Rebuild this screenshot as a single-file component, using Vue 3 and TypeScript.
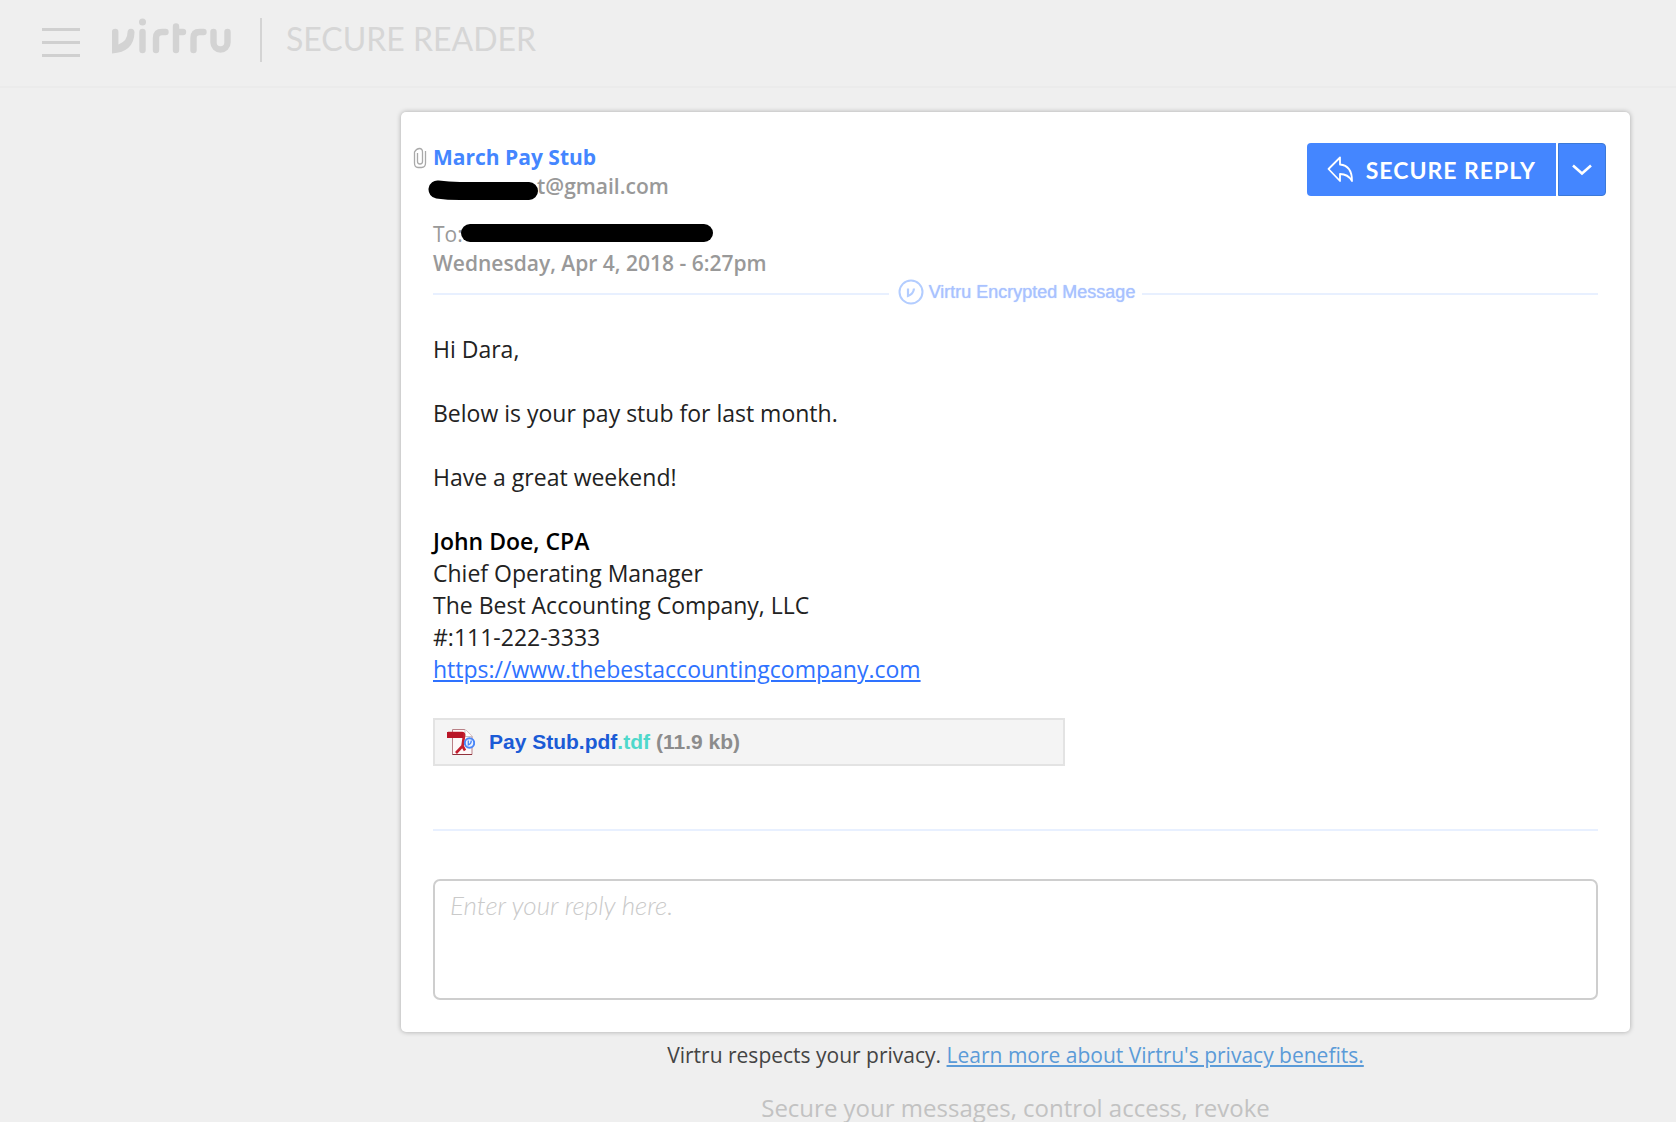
<script setup lang="ts">
import { ref } from 'vue'

const reply = ref('')

const signature: string[] = [
  'Chief Operating Manager',
  'The Best Accounting Company, LLC',
  '#:111-222-3333',
]
</script>

<template>
  <div class="page">
    <header class="topbar">
      <button class="menu" type="button" aria-label="Menu">
        <span></span><span></span><span></span>
      </button>
      <svg class="logo" width="120" height="36" viewBox="0 0 120 36" role="img" aria-label="Virtru">
        <g fill="none" stroke="#d3d3d3" stroke-width="6.4" stroke-linecap="round" stroke-linejoin="round">
          <path d="M30.500 14V32" />
          <path d="M44 32V20q0-6 6-6h3.500" />
          <path d="M64 8.500V32M64 14h7" />
          <path d="M81.500 32V20q0-6 6-6h4" />
          <path d="M101.500 14v10.500a7 7 0 0 0 14 0V14" />
        </g>
        <circle cx="30.500" cy="4" r="3.500" fill="#d3d3d3" />
        <path d="M0 13.500q0-2.800 3.200-2.800t3.200 2.800V26.500Q15.500 23 15.500 14.500q0-3.800 3.500-3.800t3.500 3.800Q22 34 0 35.500z" fill="#d3d3d3" />
      </svg>
      <span class="product">SECURE READER</span>
    </header>

    <div class="column">
      <main class="card">
        <div class="head">
          <div class="meta">
            <h1 class="subject">
              <svg class="clip" width="14" height="22" viewBox="0 0 14 22" aria-hidden="true">
                <path d="M4.500 6v8.500a2.500 2.500 0 0 0 5 0V5Q9.500 1.500 6.500 1.500T1.500 5V16q0 4.500 3.500 4.500h3.500q4 0 4-4.500V4" fill="none" stroke="#a9a9a9" stroke-width="1.300" />
              </svg>
              March Pay Stub
            </h1>
            <p class="from">
              <svg class="redact redact-from" width="110" height="21" viewBox="0 0 110 21" aria-hidden="true">
                <path d="M9.500 9.500Q20 11 32 11H101" fill="none" stroke="#000" stroke-width="18" stroke-linecap="round" />
              </svg>t@gmail.com
            </p>
            <p class="to">To:<span class="redact redact-to"></span></p>
            <p class="date">Wednesday, Apr 4, 2018 - 6:27pm</p>
          </div>
          <div class="actions">
            <button class="reply" type="button">
              <svg width="27" height="27" viewBox="0 0 27 27" aria-hidden="true">
                <path d="M1.500 13L13 1.500V8.500Q25 9.500 25 25Q21 18 13 18V25z" fill="none" stroke="#fff" stroke-width="1.800" stroke-linejoin="round" />
              </svg>
              SECURE REPLY
            </button>
            <button class="more" type="button" aria-label="More reply options">
              <svg width="22" height="14" viewBox="0 0 22 14" aria-hidden="true">
                <path d="M2 2.500L11 10.500L20 2.500" fill="none" stroke="#fff" stroke-width="2.600" />
              </svg>
            </button>
          </div>
        </div>

        <div class="seal">
          <svg width="26" height="26" viewBox="0 0 26 26" aria-hidden="true">
            <circle cx="13" cy="13" r="11.500" fill="none" stroke="#b3cdff" stroke-width="2" />
            <path d="M10 9.500V17Q15.500 15 16 9.500" fill="none" stroke="#b3cdff" stroke-width="2.200" />
          </svg>
          Virtru Encrypted Message
        </div>

        <div class="body">
          <p>Hi Dara,</p>
          <p>Below is your pay stub for last month.</p>
          <p>Have a great weekend!</p>
          <div class="signature">
            <strong>John Doe, CPA</strong>
            <span v-for="line in signature" :key="line">{{ line }}</span>
            <a href="https://www.thebestaccountingcompany.com">https://www.thebestaccountingcompany.com</a>
          </div>
        </div>

        <div class="attachment">
          <svg width="28" height="28" viewBox="0 0 28 28" aria-hidden="true">
            <path d="M5.500 1.500H18L25 8.500V26.500H5.500z" fill="#fdf8f8" stroke="#b98086" />
            <path d="M18 1.500V8.500H25" fill="#fff" stroke="#c9c2c4" />
            <path d="M5.500 26.500H25" stroke="#90323c" />
            <path d="M1 5H15q2.500 0 2 3L15.500 18 18 22.500M15.500 18L9 25" fill="none" stroke="#c41e2e" stroke-width="2.600" />
            <path d="M0 4H16V10H0z" fill="#b91527" />
            <circle cx="22.500" cy="15" r="4.700" fill="#e9f1ff" stroke="#4a86f7" stroke-width="2" />
            <path d="M21.300 12.500V17Q24.300 16 24.300 12.500" fill="none" stroke="#4a86f7" stroke-width="1.300" />
          </svg>
          <a class="file" href="#attachment">Pay Stub.pdf<span class="ext">.tdf</span></a>
          <span class="size">(11.9 kb)</span>
        </div>

        <hr class="rule" />

        <textarea v-model="reply" class="editor" aria-label="Reply" placeholder="Enter your reply here."></textarea>
      </main>

      <footer class="footer">
        <p class="privacy">Virtru respects your privacy. <a href="#privacy">Learn more about Virtru's privacy benefits.</a></p>
        <p class="tagline">Secure your messages, control access, revoke</p>
      </footer>
    </div>
  </div>
</template>

<style>
body {
  background: #efefef;
  overflow: hidden;
}
</style>

<style scoped>
.page {
  font-family: "Open Sans", "Noto Sans", sans-serif;
  color: #222;
}
p,
h1 {
  margin: 0;
}
button {
  border: 0;
  padding: 0;
  cursor: pointer;
}
.topbar {
  display: flex;
  align-items: flex-start;
  height: 88px;
  box-sizing: border-box;
  padding: 18px 42px 0;
  border-bottom: 2px solid #ebebeb;
}
.menu {
  display: flex;
  flex-direction: column;
  gap: 10px;
  width: 38px;
  padding-top: 10px;
  background: none;
}
.menu span {
  height: 3px;
  background: #d0d0d0;
}
.logo {
  margin-left: 32px;
}
.product {
  margin-left: 28px;
  padding-left: 24px;
  border-left: 2px solid #d4d4d4;
  height: 44px;
  line-height: 42px;
  font-family: Lato, sans-serif;
  font-size: 32px;
  color: #d6d6d6;
}
.column {
  margin: 24px 46px 0 401px;
}
.card {
  background: #fff;
  border-radius: 5px;
  box-shadow: 0 0 5px rgba(0, 0, 0, 0.3);
  padding: 31px 32px 32px;
}
.head {
  display: flex;
  justify-content: space-between;
  align-items: flex-start;
  margin-right: -8px;
}
.meta {
  font-size: 21px;
  line-height: 29px;
  font-weight: 600;
  color: #999;
}
.subject {
  position: relative;
  font-size: 21px;
  line-height: 29px;
  font-weight: 700;
  color: #4486ff;
}
.clip {
  position: absolute;
  left: -20px;
  top: 4px;
}
.from {
  position: relative;
  padding-left: 104px;
}
.redact {
  position: absolute;
}
.redact-from {
  left: -5px;
  top: 8px;
}
.to {
  position: relative;
  margin-top: 19px;
  font-weight: 400;
}
.redact-to {
  left: 28px;
  top: 4px;
  width: 252px;
  height: 18px;
  border-radius: 9px;
  background: #000;
}
.actions {
  display: flex;
  gap: 2px;
  height: 53px;
}
.reply,
.more {
  display: flex;
  align-items: center;
  background: #4486ff;
  color: #fff;
}
.reply {
  gap: 12px;
  padding: 0 20px;
  border-radius: 4px 0 0 4px;
  font-family: Lato, sans-serif;
  font-size: 23px;
  font-weight: 700;
  letter-spacing: 1px;
}
.more {
  justify-content: center;
  width: 48px;
  border: 1px solid #3b79d8;
  border-radius: 0 4px 4px 0;
}
.seal {
  display: flex;
  align-items: center;
  gap: 5px;
  margin-top: 1px;
  font-family: "Liberation Sans", Arial, sans-serif;
  font-size: 18px;
  line-height: 26px;
  color: #a9c2ff;
  text-shadow: 0 0 1px #a9c2ff;
}
.seal::before,
.seal::after {
  content: "";
  flex: 1;
  height: 2px;
  margin-top: 3px;
  background: #e8f0ff;
}
.seal::before {
  margin-right: 4px;
}
.seal::after {
  margin-left: 2px;
}
.body {
  margin-top: 28px;
  font-size: 23px;
  line-height: 32px;
}
.body p {
  margin-bottom: 32px;
}
.signature {
  display: flex;
  flex-direction: column;
  align-items: flex-start;
}
.signature strong {
  font-weight: 600;
  color: #000;
}
.signature a {
  color: #2e72ff;
}
.attachment {
  display: flex;
  align-items: center;
  max-width: 632px;
  height: 48px;
  margin-top: 33px;
  box-sizing: border-box;
  padding: 0 12px;
  border: 2px solid #e3e3e3;
  background: #f4f4f4;
  font-family: "Liberation Sans", Arial, sans-serif;
  font-size: 21px;
  font-weight: 700;
}
.file {
  margin-left: 14px;
  color: #1b5bd6;
  text-decoration: none;
}
.ext {
  color: #4fd8cb;
}
.size {
  margin-left: 6px;
  color: #8c8c8c;
}
.rule {
  height: 2px;
  margin: 63px 0 0;
  border: 0;
  background: #e8f0ff;
}
.editor {
  display: block;
  width: 100%;
  height: 121px;
  margin-top: 48px;
  box-sizing: border-box;
  padding: 8px 15px;
  border: 2px solid #cecece;
  border-radius: 7px;
  resize: none;
  outline: none;
  background: #fff;
  font-family: Lato, sans-serif;
  font-size: 26px;
  line-height: 32px;
}
.editor::placeholder {
  color: #cacaca;
  font-style: italic;
  font-weight: 300;
}
.footer {
  text-align: center;
}
.privacy {
  margin-top: 8px;
  font-size: 21px;
  line-height: 30px;
  color: #444;
}
.privacy a {
  color: #5b9bd8;
}
.tagline {
  margin-top: 22px;
  font-size: 24px;
  line-height: 32px;
  color: #c2c2c2;
}
</style>
